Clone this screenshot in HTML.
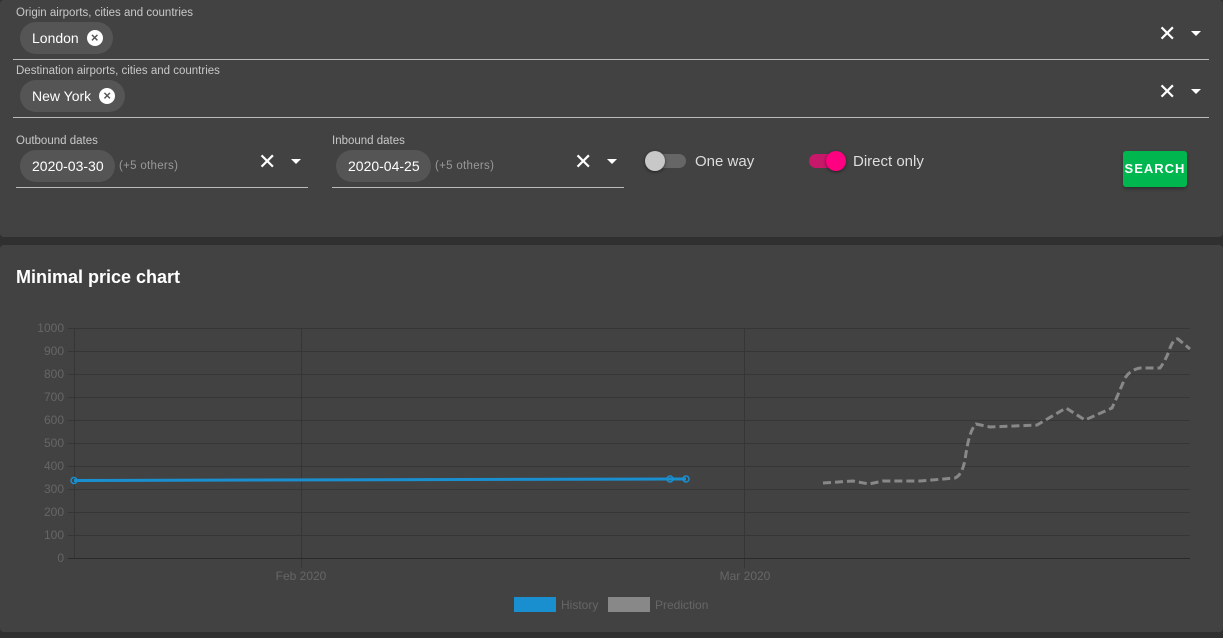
<!DOCTYPE html>
<html><head><style>
*{box-sizing:border-box;margin:0;padding:0}
body{width:1223px;height:638px;background:#303030;font-family:"Liberation Sans",sans-serif;position:relative;overflow:hidden;color:#fff}
.card{position:absolute;left:0;width:1223px;background:#424242;border-radius:4px}
.lbl{position:absolute;font-size:11.5px;color:#c8c8c8}
.chip{position:absolute;height:32px;border-radius:16px;background:#555;font-size:14px;color:#fff;line-height:32px;padding-left:12px}
.ul{position:absolute;height:1px;background:#bbb}
.x{position:absolute;font-size:22px;color:#fff;line-height:20px}
.tri{position:absolute;width:0;height:0;border-left:5px solid transparent;border-right:5px solid transparent;border-top:5px solid #fff}
.cx{display:inline-block;width:16px;height:16px;border-radius:50%;background:#fff;color:#555;font-size:13px;line-height:16px;text-align:center;font-weight:bold;vertical-align:middle;margin-left:8px;margin-top:-3px}
.oth{position:absolute;font-size:11.5px;color:#999;letter-spacing:.3px}
</style></head><body>
<div class="card" style="top:0;height:237px">
<div class="lbl" style="left:16px;top:7px">Origin airports, cities and countries</div>
<div class="chip" style="left:20px;top:22px;width:93px">London<span class="cx">×</span></div>
<div class="x" style="left:1158px;top:24px">✕</div><div class="tri" style="left:1191px;top:31px"></div>
<div class="ul" style="left:13px;top:59px;width:1196px"></div>
<div class="lbl" style="left:16px;top:65px">Destination airports, cities and countries</div>
<div class="chip" style="left:20px;top:80px;width:105px">New York<span class="cx">×</span></div>
<div class="x" style="left:1158px;top:82px">✕</div><div class="tri" style="left:1191px;top:89px"></div>
<div class="ul" style="left:13px;top:117px;width:1196px"></div>
<div class="lbl" style="left:16px;top:135px">Outbound dates</div>
<div class="chip" style="left:20px;top:150px;width:95px">2020-03-30</div>
<div class="oth" style="left:119px;top:160px">(+5 others)</div>
<div class="x" style="left:258px;top:152px">✕</div><div class="tri" style="left:291px;top:159px"></div>
<div class="ul" style="left:16px;top:187px;width:292px"></div>
<div class="lbl" style="left:332px;top:135px">Inbound dates</div>
<div class="chip" style="left:336px;top:150px;width:95px">2020-04-25</div>
<div class="oth" style="left:435px;top:160px">(+5 others)</div>
<div class="x" style="left:574px;top:152px">✕</div><div class="tri" style="left:607px;top:159px"></div>
<div class="ul" style="left:332px;top:187px;width:292px"></div>
<div style="position:absolute;left:650px;top:154px;width:36px;height:14px;border-radius:7px;background:#666"></div>
<div style="position:absolute;left:645px;top:151px;width:20px;height:20px;border-radius:50%;background:#c8c8c8;box-shadow:0 1px 3px rgba(0,0,0,.5)"></div>
<div style="position:absolute;left:695px;top:153px;font-size:15px;color:#ddd">One way</div>
<div style="position:absolute;left:809px;top:154px;width:36px;height:14px;border-radius:7px;background:#c8186a"></div>
<div style="position:absolute;left:826px;top:151px;width:20px;height:20px;border-radius:50%;background:#ff0080;box-shadow:0 1px 3px rgba(0,0,0,.5)"></div>
<div style="position:absolute;left:853px;top:153px;font-size:15px;color:#ddd">Direct only</div>
<div style="position:absolute;left:1123px;top:151px;width:64px;height:36px;background:#00b74f;border-radius:3px;color:#fff;font-size:13px;font-weight:bold;letter-spacing:1px;text-align:center;line-height:36px;box-shadow:0 2px 3px rgba(0,0,0,.3)">SEARCH</div>
</div>
<div class="card" style="top:245px;height:387px">
<div style="position:absolute;left:16px;top:22px;font-size:18px;font-weight:bold;color:#fff">Minimal price chart</div>
</div>
<svg style="position:absolute;left:0;top:0" width="1223" height="638" font-family="Liberation Sans" font-size="12" fill="#666">
<g stroke="#363636" stroke-width="1">
<line x1="68" y1="328.5" x2="1190" y2="328.5"/><line x1="68" y1="351.5" x2="1190" y2="351.5"/><line x1="68" y1="374.5" x2="1190" y2="374.5"/><line x1="68" y1="397.5" x2="1190" y2="397.5"/><line x1="68" y1="420.5" x2="1190" y2="420.5"/><line x1="68" y1="443.5" x2="1190" y2="443.5"/><line x1="68" y1="466.5" x2="1190" y2="466.5"/><line x1="68" y1="489.5" x2="1190" y2="489.5"/><line x1="68" y1="512.5" x2="1190" y2="512.5"/><line x1="68" y1="535.5" x2="1190" y2="535.5"/>
<line x1="74.5" y1="328" x2="74.5" y2="558"/><line x1="301.5" y1="328" x2="301.5" y2="568"/><line x1="744.5" y1="328" x2="744.5" y2="568"/>
</g>
<line x1="68" y1="558.5" x2="1190" y2="558.5" stroke="#2a2a2a"/>
<g text-anchor="end">
<text x="64" y="332">1000</text><text x="64" y="355">900</text><text x="64" y="378">800</text><text x="64" y="401">700</text><text x="64" y="424">600</text><text x="64" y="447">500</text><text x="64" y="470">400</text><text x="64" y="493">300</text><text x="64" y="516">200</text><text x="64" y="539">100</text><text x="64" y="562">0</text>
</g>
<text x="301" y="580" text-anchor="middle">Feb 2020</text><text x="745" y="580" text-anchor="middle">Mar 2020</text>
<polyline points="74,480.5 670,479 686,479" fill="none" stroke="#1a8fd0" stroke-width="3"/>
<g fill="none" stroke="#1a8fd0" stroke-width="1.5"><circle cx="74" cy="480.5" r="3"/><circle cx="670" cy="479" r="3"/><circle cx="686" cy="479" r="3"/></g>
<path d="M823,483 L853,481 L869,484 L883,481 L920,481 L955,478 Q962,475 965,460 Q969,430 976,424 L990,427 L1037,425 L1066,408 L1085,420 L1112,408 Q1118,395 1125,378 Q1130,370 1140,368 L1160,368 Q1166,360 1170,348 Q1174,338 1178,339 L1190,349" fill="none" stroke="#888" stroke-width="3" stroke-dasharray="8,4"/>
<rect x="514" y="597" width="42" height="15" fill="#1a8fd0"/>
<rect x="608" y="597" width="42" height="15" fill="#888"/>
<text x="561" y="609" font-size="12">History</text><text x="655" y="609" font-size="12">Prediction</text>
</svg>
</body></html>
